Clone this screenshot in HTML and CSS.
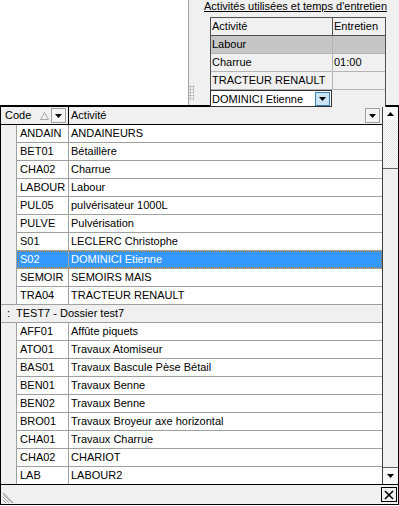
FILE: index.html
```html
<!DOCTYPE html>
<html>
<head>
<meta charset="utf-8">
<link rel="stylesheet" href="styles.css">
</head>
<body>
<div class="top">
  <div class="blank"></div>
  <div class="splitter"><span class="grip"></span></div>
  <div class="panel">
    <div class="title">Activités utilisées et temps d'entretien</div>
    <div class="mini">
      <div class="mrow mhead"><div class="mc c1">Activité</div><div class="mc c2">Entretien</div></div>
      <div class="mrow msel"><div class="mc c1">Labour</div><div class="mc c2"></div></div>
      <div class="mrow"><div class="mc c1">Charrue</div><div class="mc c2">01:00</div></div>
      <div class="mrow"><div class="mc c1">TRACTEUR RENAULT</div><div class="mc c2"></div></div>
      <div class="mrow"><div class="mc c1 editor"><span class="etext">DOMINICI Etienne</span><span class="ebtn"><svg width="7" height="4" viewBox="0 0 7 4"><path d="M0 0h7L3.5 4z" fill="#000"/></svg></span></div><div class="mc c2"></div></div>
    </div>
  </div>
</div>
<div class="popup">
  <div class="pbody">
    <div class="table">
      <div class="thead">
        <div class="h1"><span class="htext">Code</span><span class="sort"><svg width="9" height="8" viewBox="0 0 9 8"><path d="M4.5 0.5L8.5 7.5H0.5Z" fill="none" stroke="#a8a8a8"/></svg></span><span class="hbtn"><svg width="7" height="4" viewBox="0 0 7 4"><path d="M0 0h7L3.5 4z" fill="#000"/></svg></span></div>
        <div class="h2"><span class="htext">Activité</span><span class="hbtn"><svg width="7" height="4" viewBox="0 0 7 4"><path d="M0 0h7L3.5 4z" fill="#000"/></svg></span></div>
      </div>
      <div class="row"><div class="ind"></div><div class="code">ANDAIN</div><div class="act">ANDAINEURS</div></div>
      <div class="row"><div class="ind"></div><div class="code">BET01</div><div class="act">Bétaillère</div></div>
      <div class="row"><div class="ind"></div><div class="code">CHA02</div><div class="act">Charrue</div></div>
      <div class="row"><div class="ind"></div><div class="code">LABOUR</div><div class="act">Labour</div></div>
      <div class="row"><div class="ind"></div><div class="code">PUL05</div><div class="act">pulvérisateur 1000L</div></div>
      <div class="row"><div class="ind"></div><div class="code">PULVE</div><div class="act">Pulvérisation</div></div>
      <div class="row"><div class="ind"></div><div class="code">S01</div><div class="act">LECLERC Christophe</div></div>
      <div class="row sel"><div class="ind"></div><div class="code">S02</div><div class="act">DOMINICI Etienne</div></div>
      <div class="row"><div class="ind"></div><div class="code">SEMOIR</div><div class="act">SEMOIRS MAIS</div></div>
      <div class="row endgroup"><div class="ind"></div><div class="code">TRA04</div><div class="act">TRACTEUR RENAULT</div></div>
      <div class="group"><span class="colon">:</span><span>TEST7 - Dossier test7</span></div>
      <div class="row"><div class="ind"></div><div class="code">AFF01</div><div class="act">Affûte piquets</div></div>
      <div class="row"><div class="ind"></div><div class="code">ATO01</div><div class="act">Travaux Atomiseur</div></div>
      <div class="row"><div class="ind"></div><div class="code">BAS01</div><div class="act">Travaux Bascule Pèse Bétail</div></div>
      <div class="row"><div class="ind"></div><div class="code">BEN01</div><div class="act">Travaux Benne</div></div>
      <div class="row"><div class="ind"></div><div class="code">BEN02</div><div class="act">Travaux Benne</div></div>
      <div class="row"><div class="ind"></div><div class="code">BRO01</div><div class="act">Travaux Broyeur axe horizontal</div></div>
      <div class="row"><div class="ind"></div><div class="code">CHA01</div><div class="act">Travaux Charrue</div></div>
      <div class="row"><div class="ind"></div><div class="code">CHA02</div><div class="act">CHARIOT</div></div>
      <div class="row last"><div class="ind"></div><div class="code">LAB</div><div class="act">LABOUR2</div></div>
    </div>
    <div class="vscroll">
      <div class="sbtn up"><svg width="7" height="4" viewBox="0 0 7 4"><path d="M0 4h7L3.5 0z" fill="#000"/></svg></div>
      <div class="track"></div>
      <div class="thumb"></div>
      <div class="sbtn down"><svg width="7" height="4" viewBox="0 0 7 4"><path d="M0 0h7L3.5 4z" fill="#000"/></svg></div>
    </div>
  </div>
  <div class="footer">
    <span class="fgrip"><svg width="11" height="11" viewBox="0 0 11 11"><path d="M0 2L9 11M0 5L6 11M0 8L3 11M0 0.5L10.5 11" stroke="#a0a0a0" stroke-width="1" fill="none"/></svg></span>
    <span class="xbtn"><svg width="10" height="10" viewBox="0 0 10 10"><path d="M1 1L9 9M9 1L1 9" stroke="#000" stroke-width="1.6" fill="none"/></svg></span>
  </div>
</div>
</body>
</html>
```

FILE: styles.css
```css
* { box-sizing: border-box; margin: 0; padding: 0; }
html, body { width: 399px; height: 506px; overflow: hidden; background: #fff; }
body { font-family: "Liberation Sans", Arial, sans-serif; font-size: 11px; color: #000; }

.top { display: flex; height: 105px; }
.blank { width: 188px; background: #fff; }
.splitter { width: 6px; border-left: 1px solid #a0a0a0; background: #f0f0f0; display: flex; align-items: flex-end; padding-bottom: 4px; }
.grip { display: block; width: 6px; height: 16px; background-image: radial-gradient(circle, #a8a8a8 0.9px, transparent 1.1px); background-size: 3px 3px; }
.panel { flex: 1; background: #f0f0f0; padding-left: 10px; }
.title { line-height: 13px; text-decoration: underline; white-space: nowrap; }
.mini { margin: 4px 0 0 6px; width: 176px; border: 1px solid #505050; border-bottom: 0; }
.mrow { display: flex; height: 18px; border-bottom: 1px solid #b4b4b4; background: #f0f0f0; }
.mc { line-height: 17px; padding-left: 1px; white-space: nowrap; overflow: hidden; }
.c1 { width: 122px; border-right: 1px solid #b4b4b4; }
.c2 { flex: 1; }
.mhead { border-bottom-color: #505050; }
.mhead .c1 { border-right-color: #505050; }
.msel { background: #c6c6c6; }
.editor { display: flex; align-items: center; justify-content: space-between; background: #fff; border: 1px solid #303030; margin-left: -1px; width: 122px; padding-right: 1px; line-height: 14px; }
.ebtn { width: 15px; height: 14px; background: #cce4f7; border: 1px solid #3c7fb1; display: flex; align-items: center; justify-content: center; }

.popup { height: 400px; border: 1px solid #000; border-top-width: 2px; display: flex; flex-direction: column; background: #fff; }
.pbody { display: flex; height: 377px; }
.table { flex: 1; border-right: 1px solid #404040; }
.thead { display: flex; height: 18px; border-bottom: 1px solid #000; background: #f0f0f0; }
.h1 { width: 68px; border-right: 1px solid #000; display: flex; align-items: center; padding-left: 4px; }
.h2 { flex: 1; display: flex; align-items: center; padding-left: 2px; }
.htext { flex: 1; line-height: 17px; }
.sort { display: flex; margin-right: 2px; }
.hbtn { width: 15px; height: 15px; border: 1px solid #a0a0a0; background: #f4f4f4; display: flex; align-items: center; justify-content: center; margin-right: 2px; }

.row { display: flex; height: 18px; position: relative; }
.ind { width: 16px; background: #f0f0f0; border-right: 1px solid #a0a0a0; }
.code { width: 52px; border-right: 1px solid #a0a0a0; border-bottom: 1px solid #a0a0a0; padding-left: 3px; line-height: 17px; white-space: nowrap; }
.act { flex: 1; border-bottom: 1px solid #a0a0a0; padding-left: 2px; line-height: 17px; white-space: nowrap; }
.row.last { height: 17px; }
.row.last .code, .row.last .act { border-bottom: 0; }
.row.endgroup .ind { border-bottom: 1px solid #a0a0a0; }
.sel .code, .sel .act { background: #3399ff; color: #fff; }
.sel::after { content: ""; position: absolute; left: 17px; right: 0; top: 0; bottom: 1px; border: 1px dotted #c07a3a; }
.group { height: 18px; background: #f0f0f0; border-bottom: 1px solid #a0a0a0; line-height: 17px; display: flex; padding-left: 6px; }
.colon { width: 9px; }

.vscroll { width: 15px; display: flex; flex-direction: column; }
.sbtn { display: flex; align-items: center; justify-content: center; background: #f8f8f8; }
.up { height: 13px; }
.down { height: 16px; }
.track { height: 48px; background: repeating-conic-gradient(#e4e4e4 0 25%, #ffffff 0 50%) 0 0 / 2px 2px; }
.thumb { flex: 1; background: #f0f0f0; border-top: 1px solid #606060; border-bottom: 1px solid #606060; }

.footer { height: 20px; border-top: 1px solid #000; background: #f0f0f0; display: flex; align-items: center; justify-content: space-between; padding: 0 1px 0 2px; }
.fgrip { display: flex; margin-top: 6px; }
.xbtn { width: 16px; height: 15px; border: 1px solid #000; background: #f0f0f0; display: flex; align-items: center; justify-content: center; }
```
